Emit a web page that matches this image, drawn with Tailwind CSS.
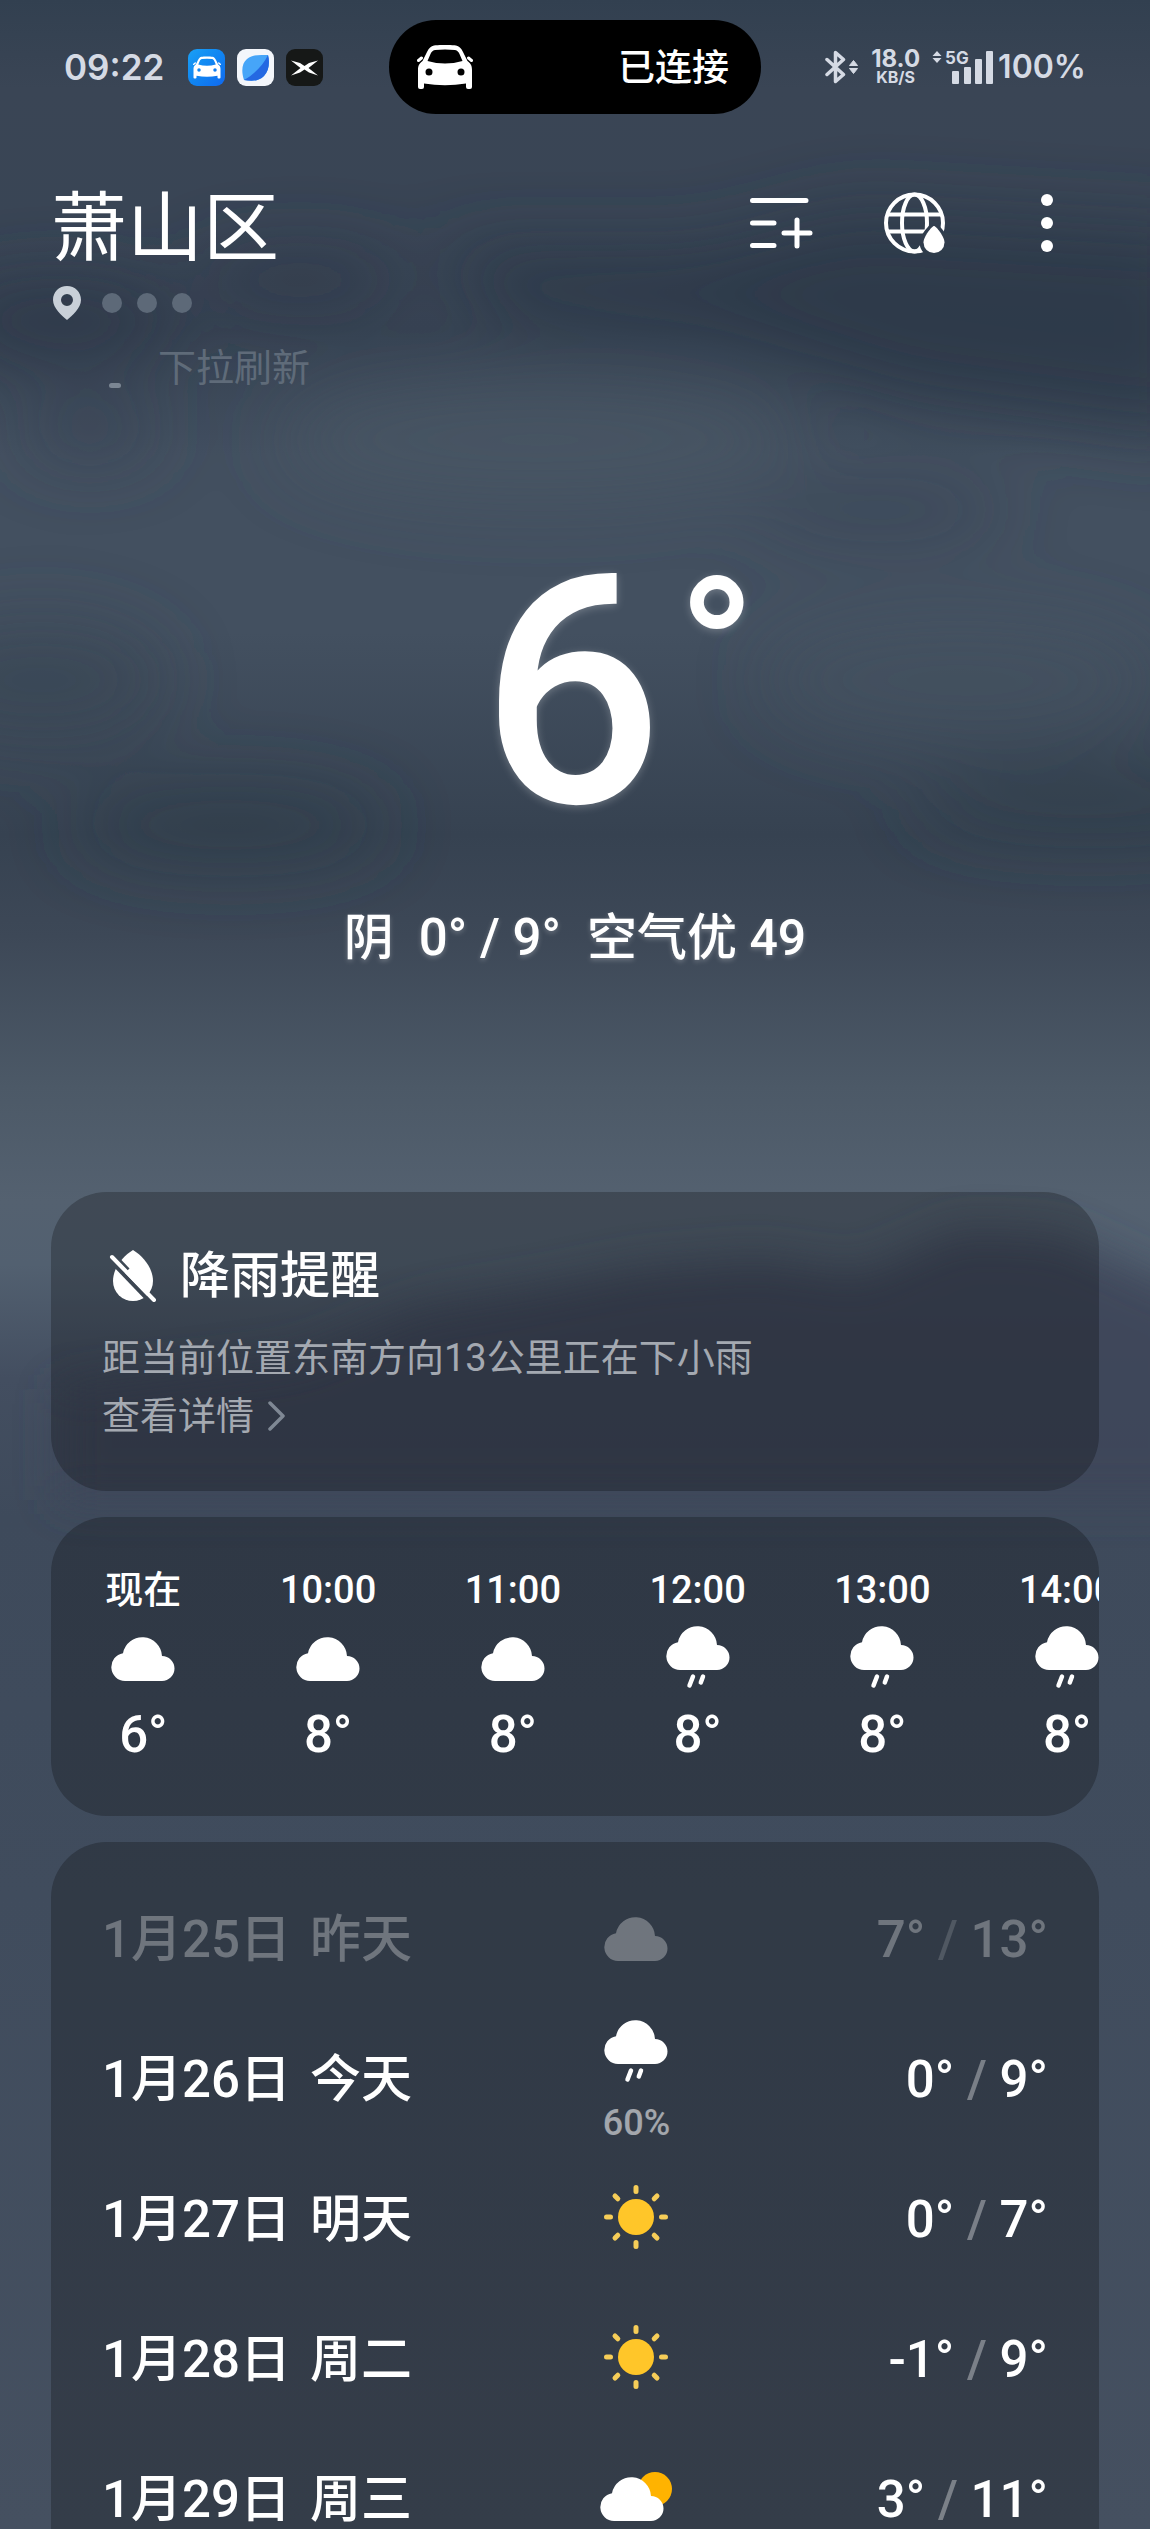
<!DOCTYPE html>
<html lang="zh-CN">
<head>
<meta charset="utf-8">
<meta name="viewport" content="width=device-width, initial-scale=1">
<title>萧山区 天气</title>
<script src="https://cdn.jsdelivr.net/npm/@tailwindcss/browser@4"></script>
</head>
<body class="bg-[#3b4656]">

<!-- Shared icon shapes -->
<svg class="hidden" aria-hidden="true">
  <defs>
    <path id="cloud" d="M14 44A14 14 0 0 1 12 16.200A19.700 19.700 0 0 1 51 19A12.500 12.500 0 0 1 51 44Z"/>
    <symbol id="i-cloudy" viewBox="0 0 64 64"><use href="#cloud" y="12" fill="currentColor"/></symbol>
    <symbol id="i-rain" viewBox="0 0 64 64">
      <use href="#cloud" y="1" fill="currentColor"/>
      <path d="M27 51.500L23.500 60.500M37 51.500L34.800 57.500" stroke="currentColor" stroke-width="4.500" stroke-linecap="round"/>
    </symbol>
    <symbol id="i-sun" viewBox="0 0 64 64">
      <circle cx="32" cy="32" r="18" fill="#ffc629"/>
      <path d="M32 2.500v4M32 57.500v4M2.500 32h4M57.500 32h4M11 11l2.800 2.800M50.200 50.200l2.800 2.800M11 53l2.800-2.800M50.200 13.800L53 11" stroke="#f6cd58" stroke-width="5" stroke-linecap="round"/>
    </symbol>
    <mask id="behind-cloud" maskUnits="userSpaceOnUse" x="0" y="0" width="72" height="64">
      <rect width="72" height="64" fill="#fff"/>
      <use href="#cloud" y="12" fill="#000" stroke="#000" stroke-width="7"/>
    </mask>
    <symbol id="i-partly" viewBox="0 0 72 64">
      <circle cx="55" cy="24" r="17" fill="#ffb300" mask="url(#behind-cloud)"/>
      <use href="#cloud" y="12" fill="currentColor"/>
    </symbol>
    <symbol id="i-car" viewBox="0 0 56 44">
      <path fill-rule="evenodd" fill="currentColor" d="M17 0.500C22 -0.200 34 -0.200 39 0.500C42 1 44 3 46 7L50.500 16C54 18.500 55 21 55 25V42Q55 44 53 44H51Q49 44 49 42V38.500Q28 42 7 38.500V42Q7 44 5 44H3Q1 44 1 42V25C1 21 2 18.500 5.500 16L10 7C12 3 14 1 17 0.500ZM18 5C15.500 5.400 14.500 7 13.500 9L10.500 16Q28 21 45.500 16L42.500 9C41.500 7 40.500 5.400 38 5Q28 4 18 5ZM12 23.500a3.500 3.500 0 1 0 0 7a3.500 3.500 0 1 0 0-7ZM44 23.500a3.500 3.500 0 1 0 0 7a3.500 3.500 0 1 0 0-7Z"/>
      <path d="M4.500 13L1.500 15.500M51.500 13L54.500 15.500" stroke="currentColor" stroke-width="3" stroke-linecap="round"/>
    </symbol>
  </defs>
</svg>

<div class="relative isolate h-screen overflow-hidden font-[Roboto,'Noto_Sans_CJK_SC',sans-serif] text-white">

  <!-- Overcast sky -->
  <svg class="absolute inset-0 -z-10 h-full w-full" viewBox="0 0 1150 2529" preserveAspectRatio="none" aria-hidden="true">
    <defs>
      <linearGradient id="sky" x1="0" y1="0" x2="0" y2="1">
        <stop offset="0" stop-color="#324050"/>
        <stop offset=".035" stop-color="#3a4555"/>
        <stop offset=".09" stop-color="#394555"/>
        <stop offset=".13" stop-color="#364252"/>
        <stop offset=".18" stop-color="#435060"/>
        <stop offset=".25" stop-color="#435060"/>
        <stop offset=".33" stop-color="#364251"/>
        <stop offset=".37" stop-color="#3d4857"/>
        <stop offset=".43" stop-color="#4c5967"/>
        <stop offset=".475" stop-color="#546170"/>
        <stop offset=".5" stop-color="#526070"/>
        <stop offset=".545" stop-color="#434e60"/>
        <stop offset=".6" stop-color="#3e4a5b"/>
        <stop offset=".75" stop-color="#404c5d"/>
        <stop offset="1" stop-color="#455060"/>
      </linearGradient>
      <filter id="haze" x="-30%" y="-60%" width="160%" height="220%"><feGaussianBlur stdDeviation="36"/></filter>
      <filter id="edge" x="-10%" y="-20%" width="120%" height="140%"><feGaussianBlur stdDeviation="22"/></filter>
    </defs>
    <rect width="1150" height="2529" fill="url(#sky)"/>
    <g filter="url(#haze)">
      <path d="M440 250L700 250L850 210L1200 230V440L900 400L720 340L500 320Z" fill="#2b3848" fill-opacity=".8"/>
      <ellipse cx="60" cy="320" rx="120" ry="36" fill="#2c3949" fill-opacity=".9"/>
      <ellipse cx="300" cy="280" rx="110" ry="28" fill="#2d3949" fill-opacity=".7"/>
      <ellipse cx="90" cy="430" rx="70" ry="30" fill="#384454" fill-opacity=".7"/>
      <ellipse cx="540" cy="440" rx="260" ry="60" fill="#4a5765" fill-opacity=".7"/>
      <ellipse cx="880" cy="510" rx="130" ry="24" fill="#384454" fill-opacity=".7"/>
      <ellipse cx="40" cy="680" rx="130" ry="60" fill="#384353" fill-opacity=".6"/>
      <ellipse cx="960" cy="680" rx="200" ry="60" fill="#465260" fill-opacity=".6"/>
      <ellipse cx="230" cy="825" rx="160" ry="40" fill="#2e3b4a" fill-opacity=".6"/>
      <ellipse cx="1090" cy="800" rx="180" ry="36" fill="#2e3b4a" fill-opacity=".6"/>
    </g>
    <path filter="url(#edge)" d="M60 1390L300 1360L420 1310L540 1290L640 1270L760 1260L860 1275L960 1230L1060 1235L1200 1300V1500H60Z" fill="#3d4759" fill-opacity=".9"/>
  </svg>

  <!-- Status bar -->
  <div class="grid h-[134px] grid-cols-[1fr_auto_1fr] items-center pr-[64px] pl-[64px] font-[Inter,'Noto_Sans_CJK_SC',sans-serif] text-[#d5dae4]">
    <div class="flex items-center">
      <time class="w-[124px] text-[35px] leading-none font-semibold">09:22</time>
      <div class="flex gap-3">
        <span class="flex size-[37px] items-center justify-center rounded-[9px] bg-linear-to-br from-[#1ba0f5] to-[#1268ee] text-white">
          <svg class="h-[23px] w-[28px]"><use href="#i-car"/></svg>
        </span>
        <svg class="size-[37px]" viewBox="0 0 37 37" aria-hidden="true">
          <rect width="37" height="37" rx="9" fill="#f3f6fb"/>
          <path d="M31 6C33 13 32 22 27 27C21 33 13 32 7 31C4 22 5 14 10 10C16 5 23 6 31 6Z" fill="#46a5f8"/>
          <path d="M31 6C33 13 32 22 27 27C21 33 13 32 7 31C16 26 26 17 31 6Z" fill="#2468e2"/>
        </svg>
        <svg class="size-[37px]" viewBox="0 0 37 37" aria-hidden="true">
          <rect width="37" height="37" rx="9" fill="#161817"/>
          <path d="M5 11.500L14 14L18.500 17L23 14L32 11.500L22.500 19L32 26.500L23 23.500L18.500 20.500L14 23.500L5 26.500L14.500 19Z" fill="#fff"/>
        </svg>
      </div>
    </div>

    <div class="flex h-[94px] w-[372px] items-center justify-between rounded-full bg-black pr-8 pl-7 text-white">
      <svg class="h-[44px] w-[56px]" aria-hidden="true"><use href="#i-car"/></svg>
      <span class="text-[37px] leading-none font-medium">已连接</span>
    </div>

    <div class="flex items-center justify-end">
      <svg class="mr-3 h-[34px] w-[34px]" viewBox="0 0 34 34" fill="none" aria-hidden="true">
        <path d="M2 9.500L18.500 24.500L10.500 31.500V2.500L18.500 9.500L2 24.500" stroke="currentColor" stroke-width="3.500" stroke-linejoin="round" stroke-linecap="round"/>
        <path d="M28.500 10.500L32.500 15.500H24.500ZM28.500 23.500L24.500 18.500H32.500Z" fill="currentColor" stroke="currentColor" stroke-linejoin="round"/>
      </svg>
      <div class="mr-3 flex flex-col items-center font-bold">
        <span class="text-[24px] leading-[20px]">18.0</span>
        <span class="text-[16px] leading-[16px]">KB/S</span>
      </div>
      <div class="relative mr-1 h-[34px] w-[62px]">
        <svg class="h-full w-full" viewBox="0 0 62 34" fill="currentColor" aria-hidden="true">
          <path d="M5 1L9.500 6H0.500ZM5 13L9.500 8H0.500Z"/>
          <rect x="20" y="21" width="7" height="13" rx="1"/>
          <rect x="32" y="17" width="7" height="17" rx="1"/>
          <rect x="43" y="9" width="7" height="25" rx="1"/>
          <rect x="54" y="1" width="7" height="33" rx="1"/>
        </svg>
        <span class="absolute top-0 left-[13px] text-[17px] leading-none font-bold">5G</span>
      </div>
      <span class="text-[32px] leading-none font-semibold">100%</span>
    </div>
  </div>

  <!-- City header -->
  <header class="mt-[49px] flex h-[92px] items-center justify-between pr-[73px] pl-[51px]">
    <h1 class="text-[76px] leading-[92px]">萧山区</h1>
    <nav class="flex items-center gap-[70px] pb-3">
      <button type="button" aria-label="城市管理">
        <svg class="size-[64px]" viewBox="0 0 64 64" fill="none" stroke="currentColor" stroke-width="5" stroke-linecap="round">
          <path d="M3.500 9.500H57M3.500 32H25M3.500 54.500H25M35 42H61M48 29V55"/>
        </svg>
      </button>
      <button type="button" aria-label="全球降水">
        <svg class="size-[64px]" viewBox="0 0 64 64" fill="none" stroke="currentColor" stroke-width="4">
          <defs>
            <mask id="drop-gap" maskUnits="userSpaceOnUse" x="0" y="0" width="64" height="64">
              <rect width="64" height="64" fill="#fff" stroke="none"/>
              <path d="M51 34.500C55 39 62 45 62 51.500A11 11 0 0 1 40 51.500C40 45 47 39 51 34.500Z" fill="#000" stroke="#000" stroke-width="7"/>
            </mask>
          </defs>
          <g mask="url(#drop-gap)">
            <circle cx="31.500" cy="32" r="28.500"/>
            <ellipse cx="31.500" cy="32" rx="12.500" ry="28.500"/>
            <path d="M4 23.500H59M4 40.500H59"/>
          </g>
          <path d="M51 35C53 35 61.500 45.500 61.500 51.500A10.500 10.500 0 0 1 40.500 51.500C40.500 45.500 49 35 51 35Z" fill="currentColor" stroke="none"/>
        </svg>
      </button>
      <button type="button" aria-label="更多">
        <svg class="h-[64px] w-[60px]" viewBox="0 0 60 64" fill="currentColor">
          <circle cx="30" cy="9" r="6"/><circle cx="30" cy="32" r="6"/><circle cx="30" cy="55" r="6"/>
        </svg>
      </button>
    </nav>
  </header>

  <div class="mt-[11px] flex h-[34px] items-center pl-[53px]">
    <svg class="mr-[21px] h-[34px] w-[28px]" viewBox="0 0 28 34" aria-hidden="true">
      <path fill-rule="evenodd" fill="#c9d0d8" d="M14 0C22 0 28 6 28 14C28 22 19 30 14 34C9 30 0 22 0 14C0 6 6 0 14 0ZM14 8a6 6 0 1 0 0 12a6 6 0 1 0 0-12Z"/>
    </svg>
    <div class="flex gap-[15px]">
      <i class="size-5 rounded-full bg-[#5d6978]"></i>
      <i class="size-5 rounded-full bg-[#5d6978]"></i>
      <i class="size-5 rounded-full bg-[#5d6978]"></i>
    </div>
  </div>

  <div class="mt-6 flex h-[48px] items-end gap-[37px] pl-[109px] text-[#5f6b79]">
    <i class="mb-1 h-[5px] w-[12px] rounded-full bg-[#7b8693]"></i>
    <p class="text-[38px] leading-[48px]">下拉刷新</p>
  </div>

  <!-- Current conditions -->
  <section class="pt-[140px]">
    <div class="grid h-[320px] grid-cols-[1fr_auto_1fr] pr-[6px] font-medium text-shadow-[0_2px_8px_rgb(255_255_255/0.25)]">
      <span class="col-start-2 text-[320px] leading-[322px]">6</span>
      <span class="pt-[18px] pl-[14px] text-[208px] leading-[208px]">°</span>
    </div>
    <p class="mt-[56px] flex h-[60px] items-center justify-center text-[50px] leading-[60px] font-medium whitespace-pre text-shadow-[0_2px_5px_rgb(255_255_255/0.25)]"><span class="mr-[25px]">阴</span><span class="mr-[26px] text-[51px]">0° / 9°</span><span>空气优 49</span></p>
  </section>

  <main class="mx-[51px] mt-[224px] flex flex-col gap-[26px]">
    <!-- Rain alert -->
    <section class="rounded-[56px] bg-[#020403]/25 px-[51px] pt-[53px] pb-[46px]">
      <h2 class="flex h-[62px] items-center text-[50px] leading-[62px] font-medium">
        <svg class="mr-[23px] ml-[7px] h-[52px] w-[48px]" viewBox="0 0 48 52" aria-hidden="true">
          <defs>
            <mask id="slash-gap" maskUnits="userSpaceOnUse" x="0" y="0" width="48" height="52">
              <rect width="48" height="52" fill="#fff"/>
              <path d="M-2 7L44 55" stroke="#000" stroke-width="4"/>
              <path d="M0 2L18 20.800" stroke="#000" stroke-width="7"/>
            </mask>
          </defs>
          <path d="M24 0C34 6 44 18 44 31A20 20 0 0 1 4 31C4 18 14 6 24 0Z" fill="#fff" mask="url(#slash-gap)"/>
          <path d="M3 7L45 50" stroke="#fff" stroke-width="4" stroke-linecap="round"/>
        </svg>
        降雨提醒
      </h2>
      <p class="mt-[22px] text-[38px] leading-[58px] text-[#a4a9b1]">距当前位置东南方向13公里正在下小雨</p>
      <a href="#" class="flex items-center gap-[14px] text-[38px] leading-[58px] text-[#a4a9b1]">
        查看详情
        <svg class="h-[30px] w-[18px]" viewBox="0 0 18 30" fill="none" stroke="#7f8894" stroke-width="3.500" stroke-linecap="round" stroke-linejoin="round" aria-hidden="true"><path d="M2 2L15 15L2 28"/></svg>
      </a>
    </section>

    <!-- Hourly forecast -->
    <section class="overflow-hidden rounded-[56px] bg-[#020403]/25">
      <ul class="flex pt-[49px] pb-[51px] text-center font-medium">
        <li class="flex w-[17.63%] shrink-0 flex-col items-center">
          <span class="text-[38px] leading-[48px]">现在</span>
          <svg class="mt-[11px] mb-4 size-[64px]" role="img" aria-label="阴"><use href="#i-cloudy"/></svg>
          <span class="text-[51px] leading-[60px]">6°</span>
        </li>
        <li class="flex w-[17.63%] shrink-0 flex-col items-center">
          <span class="text-[38px] leading-[48px]">10:00</span>
          <svg class="mt-[11px] mb-4 size-[64px]" role="img" aria-label="阴"><use href="#i-cloudy"/></svg>
          <span class="text-[51px] leading-[60px]">8°</span>
        </li>
        <li class="flex w-[17.63%] shrink-0 flex-col items-center">
          <span class="text-[38px] leading-[48px]">11:00</span>
          <svg class="mt-[11px] mb-4 size-[64px]" role="img" aria-label="阴"><use href="#i-cloudy"/></svg>
          <span class="text-[51px] leading-[60px]">8°</span>
        </li>
        <li class="flex w-[17.63%] shrink-0 flex-col items-center">
          <span class="text-[38px] leading-[48px]">12:00</span>
          <svg class="mt-[11px] mb-4 size-[64px]" role="img" aria-label="小雨"><use href="#i-rain"/></svg>
          <span class="text-[51px] leading-[60px]">8°</span>
        </li>
        <li class="flex w-[17.63%] shrink-0 flex-col items-center">
          <span class="text-[38px] leading-[48px]">13:00</span>
          <svg class="mt-[11px] mb-4 size-[64px]" role="img" aria-label="小雨"><use href="#i-rain"/></svg>
          <span class="text-[51px] leading-[60px]">8°</span>
        </li>
        <li class="flex w-[17.63%] shrink-0 flex-col items-center">
          <span class="text-[38px] leading-[48px]">14:00</span>
          <svg class="mt-[11px] mb-4 size-[64px]" role="img" aria-label="小雨"><use href="#i-rain"/></svg>
          <span class="text-[51px] leading-[60px]">8°</span>
        </li>
      </ul>
    </section>

    <!-- Daily forecast -->
    <section class="rounded-t-[56px] bg-[#020403]/25 px-[51px] pt-[28px]">
      <table class="w-full table-fixed text-[51px] leading-[60px] font-medium">
        <colgroup><col class="w-[38%]"><col class="w-[37%]"><col class="w-[25%]"></colgroup>
        <tbody>
          <tr class="h-[140px] text-white/30">
            <th scope="row" class="text-left font-medium">1月25日<span class="ml-[19px]">昨天</span></th>
            <td class="pb-[6px]"><svg class="mx-auto size-[64px]" role="img" aria-label="阴"><use href="#i-cloudy"/></svg></td>
            <td class="text-right whitespace-nowrap">7° <span class="opacity-50">/</span> 13°</td>
          </tr>
          <tr class="h-[140px]">
            <th scope="row" class="text-left font-medium">1月26日<span class="ml-[19px]">今天</span></th>
            <td class="text-center">
              <svg class="mx-auto size-[64px]" role="img" aria-label="小雨"><use href="#i-rain"/></svg>
              <span class="mt-[22px] block text-[36px] leading-[36px] text-white/55">60%</span>
            </td>
            <td class="text-right whitespace-nowrap">0° <span class="opacity-35">/</span> 9°</td>
          </tr>
          <tr class="h-[140px]">
            <th scope="row" class="text-left font-medium">1月27日<span class="ml-[19px]">明天</span></th>
            <td class="pb-[6px]"><svg class="mx-auto size-[64px]" role="img" aria-label="晴"><use href="#i-sun"/></svg></td>
            <td class="text-right whitespace-nowrap">0° <span class="opacity-35">/</span> 7°</td>
          </tr>
          <tr class="h-[140px]">
            <th scope="row" class="text-left font-medium">1月28日<span class="ml-[19px]">周二</span></th>
            <td class="pb-[6px]"><svg class="mx-auto size-[64px]" role="img" aria-label="晴"><use href="#i-sun"/></svg></td>
            <td class="text-right whitespace-nowrap">-1° <span class="opacity-35">/</span> 9°</td>
          </tr>
          <tr class="h-[140px]">
            <th scope="row" class="text-left font-medium">1月29日<span class="ml-[19px]">周三</span></th>
            <td class="pb-[6px]"><svg class="mx-auto h-[64px] w-[72px]" role="img" aria-label="多云"><use href="#i-partly"/></svg></td>
            <td class="text-right whitespace-nowrap">3° <span class="opacity-35">/</span> 11°</td>
          </tr>
        </tbody>
      </table>
    </section>
  </main>
</div>
</body>
</html>
